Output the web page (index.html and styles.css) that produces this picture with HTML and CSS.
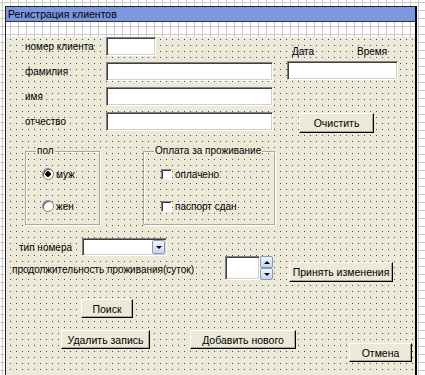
FILE: index.html
```html
<!DOCTYPE html>
<html lang="ru">
<head>
  <meta charset="UTF-8">
  <title>Регистрация клиентов</title>
  <link rel="stylesheet" href="styles.css">
</head>
<body>
  <div class="form">
    <div class="titlebar">Регистрация клиентов</div>
    <div class="body">
      <div class="top">
        <div class="fields">
          <div class="frow"><span class="lbl">номер клиента</span><span class="tb w-num"></span></div>
          <div class="frow"><span class="lbl">фамилия</span><span class="tb w-name"></span></div>
          <div class="frow"><span class="lbl">имя</span><span class="tb w-name"></span></div>
          <div class="frow"><span class="lbl">отчество</span><span class="tb w-name"></span></div>
        </div>
        <div class="side">
          <div class="dt"><span class="dt-date">Дата</span><span>Время</span></div>
          <span class="tb w-date"></span>
          <button class="btn btn-clear">Очистить</button>
        </div>
      </div>

      <div class="frames">
        <div class="frame frame-sex">
          <span class="caption">пол</span>
          <div class="opt opt-first"><span class="radio checked"></span>муж</div>
          <div class="opt"><span class="radio"></span>жен</div>
        </div>
        <div class="frame frame-pay">
          <span class="caption">Оплата за проживание</span>
          <div class="opt opt-first"><span class="check"></span>оплачено</div>
          <div class="opt"><span class="check"></span>паспорт сдан</div>
        </div>
      </div>

      <div class="room">
        <span class="room-lbl">тип номера</span>
        <span class="tb combo"><span class="xp-btn drop"><i class="arrow"></i></span></span>
      </div>

      <div class="stay">
        <span class="stay-lbl">продолжительность проживания(суток)</span>
        <span class="tb spin-box"></span>
        <span class="spin">
          <span class="xp-btn up"><i class="arrow arrow-up"></i></span>
          <span class="xp-btn"><i class="arrow"></i></span>
        </span>
        <button class="btn btn-apply">Принять изменения</button>
      </div>

      <div class="search">
        <button class="btn btn-search">Поиск</button>
      </div>

      <div class="bottom">
        <button class="btn btn-del">Удалить запись</button>
        <button class="btn btn-add">Добавить нового</button>
        <button class="btn btn-cancel">Отмена</button>
      </div>
    </div>
  </div>
</body>
</html>
```

FILE: styles.css
```css
:root {
  --face: #ece9d8;
  --title: #7b98df;
  --dot: #4a4a4a;
  --grid: #c9c9c9;
}

body {
  margin: 0;
  height: 375px;
  font-family: "Liberation Sans", Arial, sans-serif;
  font-size: 10px;
  color: #000;
  white-space: nowrap;
  background-color: #fff;
  background-image:
    linear-gradient(to right, var(--grid) 1px, transparent 1px),
    linear-gradient(to bottom, var(--grid) 1px, transparent 1px);
  background-size: 8px 8px;
  background-position: 2px 2px;
  overflow: hidden;
}

.form {
  margin: 6px 0 0 5px;
  width: 409px;
  border-top: 1px solid #222;
  border-left: 1px solid #222;
  border-right: 2px solid #000;
  border-bottom: 2px solid #000;
}
.titlebar {
  height: 14px;
  line-height: 14px;
  padding-left: 2px;
  font-size: 10.5px;
  background: var(--title);
  border-bottom: 1px solid #333;
}
.body {
  height: 344px;
  background: conic-gradient(at 1px 1px, transparent 75%, var(--dot) 0) 4px 2px / 6px 6px, var(--face);
}

/* text boxes */
.tb {
  display: block;
  box-sizing: border-box;
  height: 19px;
  background: #fff;
  border-top: 1px solid #808080;
  border-left: 1px solid #808080;
  border-right: 1px solid #fff;
  border-bottom: 1px solid #fff;
  box-shadow: inset 1px 1px #404040, inset -1px -1px #d4d0c8;
}
.w-num { width: 50px; }
.w-name { width: 167px; }
.w-date { width: 111px; margin-top: 3px; }

/* buttons */
.btn {
  display: block;
  box-sizing: border-box;
  height: 19px;
  padding: 0;
  font: inherit;
  font-size: 10.5px;
  white-space: nowrap;
  color: #000;
  background: var(--face);
  border: 1px solid;
  border-color: #fff #000 #000 #fff;
  box-shadow: inset -1px -1px #aca899;
}

.top {
  display: flex;
  margin-top: 15px;
}
.fields { padding-left: 19px; }
.frow {
  display: flex;
  align-items: center;
  height: 19px;
  margin-bottom: 6px;
}
.frow:last-child { margin-bottom: 0; }
.lbl { width: 81px; }

.side {
  margin-left: 14px;
  padding-top: 9px;
}
.dt {
  display: flex;
  line-height: 12px;
}
.dt-date {
  margin-left: 5px;
  width: 65px;
}
.btn-clear {
  width: 75px;
  height: 20px;
  margin: 33px 0 0 12px;
}

/* frames */
.frames {
  display: flex;
  margin-top: 18px;
  padding-left: 19px;
}
.frame {
  box-sizing: border-box;
  height: 74px;
  border: 1px solid #aca899;
  box-shadow: inset 1px 1px #fff, 1px 1px #fff;
}
.frame-sex { width: 75px; }
.frame-pay { width: 132px; margin-left: 43px; }
.caption {
  display: block;
  width: fit-content;
  margin: -7px 0 0 10px;
  padding: 0 1px;
  line-height: 12px;
  background: var(--face);
}
.opt {
  display: flex;
  align-items: center;
  height: 12px;
  margin-top: 20px;
  margin-left: 16px;
}
.opt-first { margin-top: 11px; }
.frame-pay .opt { margin-left: 17px; }
.radio {
  box-sizing: border-box;
  width: 12px;
  height: 12px;
  margin-right: 2px;
  border-radius: 50%;
  background: #fff;
  border: 1px solid #8a8a8a;
  box-shadow: inset 1px 1px #555;
}
.radio.checked {
  background: radial-gradient(circle, #000 2.5px, #fff 3px);
}
.check {
  box-sizing: border-box;
  width: 11px;
  height: 11px;
  margin-right: 3px;
  background: #fff;
  border-top: 1px solid #808080;
  border-left: 1px solid #808080;
  border-right: 1px solid #fff;
  border-bottom: 1px solid #fff;
  box-shadow: inset 1px 1px #404040;
}

/* room type + stay */
.room {
  display: flex;
  align-items: center;
  margin-top: 13px;
  height: 18px;
}
.room-lbl {
  width: 63px;
  padding-left: 13px;
}
.combo {
  position: relative;
  width: 85px;
  height: 18px;
}
.xp-btn {
  display: flex;
  align-items: center;
  justify-content: center;
  box-sizing: border-box;
  width: 13px;
  height: 12px;
  border: 1px solid #7f9db9;
  border-radius: 2px;
  background: linear-gradient(#f4f7fd, #c6d3f7);
}
.drop {
  position: absolute;
  right: 1px;
  top: 1px;
  height: 14px;
}
.arrow {
  width: 0;
  height: 0;
  border-left: 3px solid transparent;
  border-right: 3px solid transparent;
  border-top: 3px solid #000;
}
.arrow-up {
  border-top: 0;
  border-bottom: 3px solid #000;
}

.stay {
  display: flex;
  align-items: flex-start;
}
.stay-lbl {
  width: 213px;
  padding-left: 6px;
  margin-top: 8px;
  line-height: 12px;
}
.spin-box {
  width: 35px;
  height: 24px;
}
.spin {
  display: flex;
  flex-direction: column;
}
.btn-apply {
  width: 104px;
  height: 20px;
  margin: 6px 0 0 16px;
}

.search { margin-top: 17px; padding-left: 75px; }
.btn-search { width: 52px; }

.bottom {
  display: flex;
  align-items: flex-start;
  margin-top: 12px;
  padding-left: 55px;
}
.btn-del { width: 89px; }
.btn-add { width: 106px; margin-left: 40px; }
.btn-cancel { width: 63px; margin: 13px 0 0 53px; }
```
